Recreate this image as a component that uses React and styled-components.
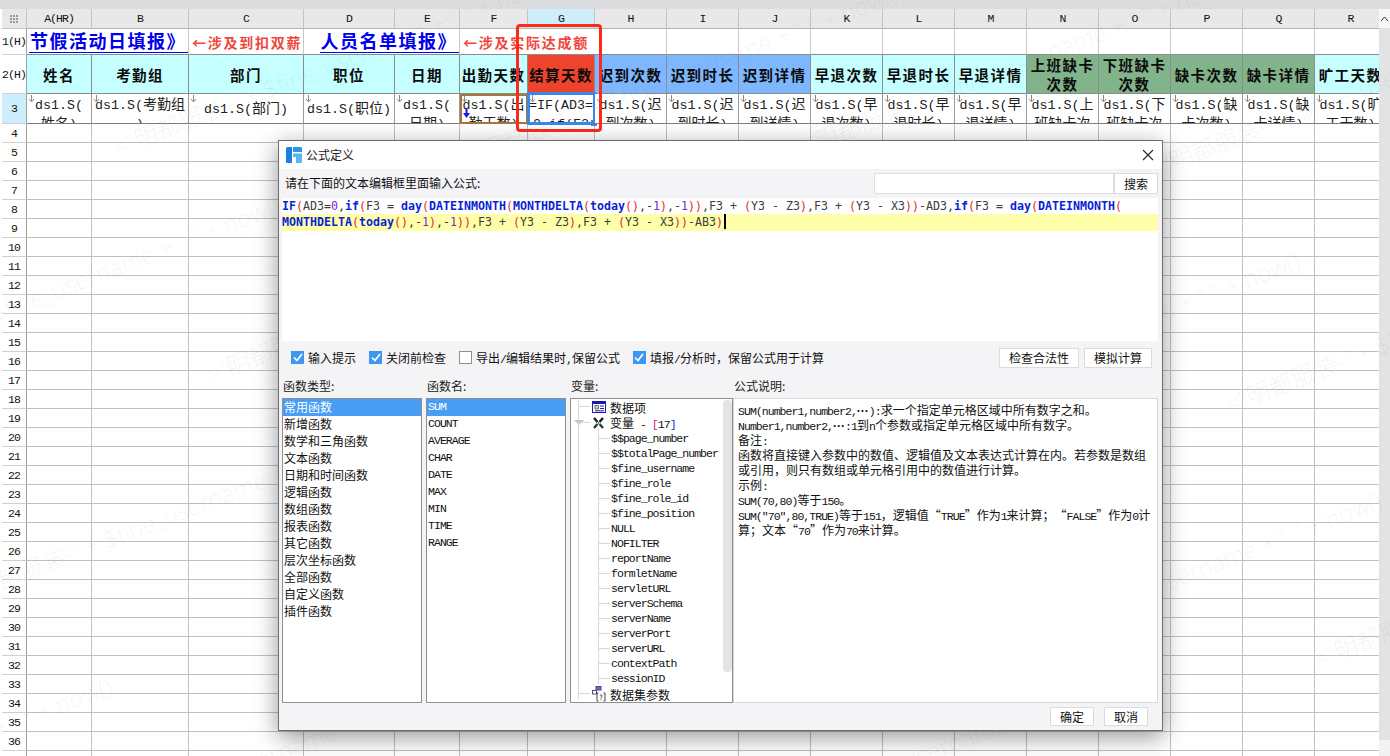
import React from "react";
import styled, { createGlobalStyle } from "styled-components";

const CJK = '"Noto Sans CJK SC", "Liberation Sans", sans-serif';
const MONO = '"Liberation Mono", "Noto Sans CJK SC", monospace';
const COLS = "27px 65px 97px 115px 91px 65px 68px 67px 72px 72px 72px 72px 72px 72px 72px 72px 72px 72px 72px";

const Global = createGlobalStyle`
  html, body { margin: 0; padding: 0; background: #fff; overflow: hidden; }
  body { font-family: ${CJK}; font-size: 12px; color: #111; }
  * { box-sizing: border-box; }
`;

const Page = styled.div`
  position: relative;
  width: 1390px;
  height: 756px;
  overflow: hidden;
  background: #fff;
`;
const TopBar = styled.div`
  height: 9px;
  background: #dcdcde;
`;
const Workspace = styled.div`
  display: flex;
  height: 747px;
`;
const Sheet = styled.div`
  width: 1379px;
  overflow: hidden;
`;
const Row = styled.div`
  display: grid;
  grid-template-columns: ${COLS};
  grid-template-rows: ${(p) => p.$h}px;
  height: ${(p) => p.$h}px;
`;
const Corner = styled.div`
  display: flex;
  align-items: center;
  justify-content: center;
  background: #e8e8e8;
  border-right: 1px solid #c4c4c4;
  border-bottom: 1px solid #c4c4c4;
  margin-left: 2px;
`;
const ColLabel = styled.div`
  display: flex;
  align-items: center;
  justify-content: center;
  background: ${(p) => (p.$active ? "#cdeefa" : "#e8e8e8")};
  border-right: 1px solid #c4c4c4;
  border-bottom: 1px solid #b4b4b4;
  font-family: ${MONO};
  font-size: 11.5px;
  letter-spacing: -0.96px;
`;
const RowLabel = styled.div`
  display: flex;
  align-items: center;
  justify-content: center;
  margin-left: 2px;
  background: ${(p) => (p.$active ? "#cdeefa" : "#fff")};
  border-right: 1px solid #a0a0a0;
  border-bottom: 1px solid #d0d0d0;
  font-family: ${MONO};
  font-size: 11.5px;
  letter-spacing: -0.96px;
  white-space: nowrap;
`;
const GridCell = styled.div`
  border-right: 1px solid #bfbfbf;
  border-bottom: 1px solid #bfbfbf;
`;
const TitleCell = styled.div`
  grid-column: span ${(p) => p.$span || 1};
  display: flex;
  align-items: ${(p) => (p.$link ? "flex-end" : "center")};
  justify-content: ${(p) => (p.$link ? "flex-end" : "flex-start")};
  padding-left: ${(p) => (p.$link ? 0 : 3)}px;
  padding-bottom: ${(p) => (p.$link ? 1 : 0)}px;
  border-right: 1px solid #c8c8c8;
  border-bottom: 1px solid #8c8c8c;
  overflow: hidden;
  white-space: nowrap;
`;
const SheetLink = styled.span`
  display: block;
  height: 25px;
  line-height: 25px;
  padding: 0 2px 0 1px;
  border-bottom: 1px solid #0000ee;
  color: #0000ee;
  font-size: 18px;
  font-weight: 700;
  letter-spacing: 1.5px;
`;
const SheetNote = styled.span`
  color: #f0463a;
  font-size: 14px;
  font-weight: 700;
  letter-spacing: 1.75px;
`;
const HeadCell = styled.div`
  display: flex;
  align-items: center;
  justify-content: center;
  text-align: center;
  overflow: hidden;
  background: ${(p) => p.$bg};
  border-right: 1px solid #8c8c8c;
  border-bottom: 1px solid #8c8c8c;
  font-size: 14.5px;
  font-weight: 700;
  letter-spacing: 1.4px;
  line-height: 19px;
  color: #0b0b0b;
  white-space: ${(p) => (p.$wrap ? "pre-line" : "nowrap")};
`;
const TemplateCell = styled.div`
  position: relative;
  min-height: 0;
  border-right: 1px solid #9a9a9a;
  border-bottom: 1px solid #7e7e7e;
  background: #fff;
  ${(p) => p.$mark && `outline: 2px solid #a5763c; outline-offset: -2px;`}
`;
const CellText = styled.div`
  height: 100%;
  overflow: hidden;
  display: flex;
  flex-direction: column;
  justify-content: ${(p) => (p.$single ? "center" : "flex-start")};
  padding-top: ${(p) => (p.$single ? 0 : 1)}px;
  text-align: center;
  font-size: 14px;
  line-height: 17px;
  color: #222;
  white-space: nowrap;
`;
const Latin13 = styled.span`
  font-family: ${MONO};
  font-size: 13.33px;
`;
const DropArrow = styled.svg`
  position: absolute;
  left: 1px;
  top: 1px;
`;
const Selection = styled.div`
  position: absolute;
  left: -1px;
  right: -2px;
  top: -2px;
  bottom: -2px;
  border: 3px solid #3a88ee;
  &::after {
    content: "";
    position: absolute;
    right: -4px;
    bottom: -4px;
    width: 6px;
    height: 6px;
    background: #3a88ee;
  }
`;
const BlueMark = styled.svg`
  position: absolute;
  left: 3px;
  top: 15px;
`;
const Scrollbar = styled.div`
  width: 11px;
  display: flex;
  flex-direction: column;
  background: #e4e4e4;
`;
const ScrollButton = styled.div`
  height: 19px;
  background: #f7f7f7;
  display: flex;
  align-items: center;
  justify-content: center;
`;
const ScrollTrack = styled.div`
  flex: 1;
  background: #e3e3e3;
`;
const ScrollEnd = styled.div`
  height: 16px;
  background: #f2f2f2;
`;
const Annotation = styled.div`
  position: absolute;
  left: 516px;
  top: 24px;
  width: 86px;
  height: 108px;
  border: 3px solid #fb2b1c;
  border-radius: 4px;
  pointer-events: none;
`;
const Watermarks = styled.div`
  position: absolute;
  inset: 0;
  pointer-events: none;
`;
const Watermark = styled.span`
  position: absolute;
  transform-origin: 0 100%;
  transform: rotate(-21deg);
  font-family: "Open Sans", "Noto Sans CJK SC", sans-serif;
  font-size: 24px;
  font-weight: 300;
  color: rgba(0, 0, 0, 0.06);
  white-space: nowrap;
`;

const Dialog = styled.div`
  position: absolute;
  left: 278px;
  top: 140px;
  width: 885px;
  height: 591px;
  display: flex;
  flex-direction: column;
  background: #f4f4f6;
  border: 1px solid #6e6e6e;
  box-shadow: 0 6px 22px rgba(0, 0, 0, 0.42);
`;
const TitleBar = styled.div`
  height: 28px;
  flex: none;
  display: flex;
  align-items: center;
  justify-content: space-between;
  padding: 0 8px 0 7px;
  background: #fff;
`;
const TitleGroup = styled.div`
  display: flex;
  align-items: center;
  gap: 4px;
  font-size: 12px;
  color: #222;
`;
const TitleText = styled.span`
  padding-bottom: 2px;
`;
const DialogBody = styled.div`
  flex: 1;
  display: flex;
  flex-direction: column;
  padding: 4px 4px 3px 3px;
`;
const SearchRow = styled.div`
  height: 21px;
  display: flex;
  align-items: center;
  padding-left: 3px;
`;
const PromptText = styled.div`
  flex: 1;
  padding-bottom: 2px;
`;
const SearchInput = styled.div`
  width: 240px;
  height: 21px;
  background: #fff;
  border: 1px solid #dedede;
`;
const FlatButton = styled.div`
  width: ${(p) => p.$w}px;
  height: ${(p) => p.$h || 20}px;
  margin-left: ${(p) => p.$ml || 0}px;
  display: flex;
  align-items: center;
  justify-content: center;
  background: #fff;
  border: 1px solid #dcdcdc;
  font-size: 12px;
  color: #111;
`;
const Editor = styled.div`
  height: 143px;
  margin-top: 4px;
  background: #fff;
  font-family: "DejaVu Sans Mono", monospace;
  font-size: 11.63px;
  white-space: pre;
`;
const EditorLine = styled.div`
  height: ${(p) => p.$h}px;
  line-height: 16px;
  background: ${(p) => (p.$current ? "#ffffaa" : "transparent")};
`;
const Token = styled.span`
  color: ${(p) => p.$c};
  font-weight: ${(p) => (p.$b ? 700 : 400)};
`;
const Caret = styled.span`
  display: inline-block;
  width: 2px;
  height: 15px;
  margin-left: 1px;
  vertical-align: -3px;
  background: #000;
`;
const OptionRow = styled.div`
  height: 21px;
  margin-top: 6px;
  display: flex;
  align-items: center;
  padding-left: 9px;
`;
const Option = styled.div`
  display: flex;
  align-items: center;
  gap: 4px;
  margin-right: 13px;
`;
const Box = styled.div`
  width: 13px;
  height: 13px;
  display: flex;
  align-items: center;
  justify-content: center;
  background: ${(p) => (p.$on ? "#3d97f2" : "#fff")};
  border: 1px solid ${(p) => (p.$on ? "#3d97f2" : "#8f8f8f")};
`;
const Spacer = styled.div`
  flex: 1;
`;
const ButtonGap = styled.div`
  display: flex;
  margin-right: 6px;
`;
const Panels = styled.div`
  display: flex;
  margin-top: 9px;
`;
const Column = styled.div`
  width: ${(p) => p.$w}px;
  flex: none;
  margin-right: ${(p) => p.$mr || 0}px;
  display: flex;
  flex-direction: column;
`;
const ColumnTitle = styled.div`
  height: 21px;
  line-height: 18px;
  padding-left: 1px;
  color: #222;
`;
const ListBox = styled.div`
  height: 305px;
  overflow: hidden;
  background: #fff;
  border: 1px solid #8f8f8f;
`;
const ListItem = styled.div`
  height: 17px;
  line-height: 15px;
  padding-left: 1px;
  background: ${(p) => (p.$on ? "#4a9df5" : "transparent")};
  color: ${(p) => (p.$on ? "#fff" : "#111")};
  font-family: ${(p) => (p.$mono ? MONO : CJK)};
  font-size: ${(p) => (p.$mono ? 11.5 : 12)}px;
  letter-spacing: ${(p) => (p.$mono ? -0.96 : 0)}px;
`;
const TreeBox = styled.div`
  position: relative;
  height: 305px;
  overflow: hidden;
  background: #fff;
  border: 1px solid #8f8f8f;
`;
const TreeThumb = styled.div`
  position: absolute;
  right: 0;
  top: 1px;
  width: 9px;
  height: 272px;
  border-radius: 4px;
  background: #e4e4e4;
`;
const TreeRow = styled.div`
  position: relative;
  height: ${(p) => (p.$root ? 16 : 15)}px;
  line-height: 15px;
  padding-left: ${(p) => (p.$root ? 21 : 40)}px;
  display: flex;
  align-items: center;
  gap: 4px;
  white-space: nowrap;
  &::before {
    content: "";
    position: absolute;
    left: ${(p) => (p.$root ? 7 : 27)}px;
    top: 7px;
    width: 12px;
    border-top: 1px solid #d8d8d8;
  }
`;
const TreeGuide = styled.div`
  position: absolute;
  left: ${(p) => p.$x}px;
  top: ${(p) => p.$top}px;
  height: ${(p) => p.$h}px;
  border-left: 1px solid #d8d8d8;
`;
const Expander = styled.div`
  position: absolute;
  left: 3px;
  top: 21px;
  width: 0;
  height: 0;
  border-left: 5px solid transparent;
  border-right: 5px solid transparent;
  border-top: 5px solid #c4c4c4;
`;
const TreeMono = styled.span`
  font-family: ${MONO};
  font-size: 11.5px;
  letter-spacing: -0.96px;
  color: ${(p) => p.$c || "#111"};
`;
const TreeLabel = styled.span`
  font-size: 12px;
  color: #111;
`;
const Description = styled.div`
  height: 305px;
  overflow: hidden;
  background: #fff;
  border: 1px solid #d8d8d8;
  padding: 3px 4px 0 4px;
  font-size: 12px;
  line-height: 15px;
  color: #111;
`;
const DescLine = styled.div`
  height: 15px;
  white-space: nowrap;
`;
const Latin = styled.span`
  font-family: ${MONO};
  font-size: 11.5px;
  letter-spacing: -0.96px;
`;
const WideQuote = styled.span`
  display: inline-block;
  width: 12px;
  text-align: ${(p) => (p.$open ? "right" : "left")};
`;
const WideDots = styled.span`
  font-family: "Liberation Sans", sans-serif;
  font-size: 12px;
  font-weight: 700;
`;
const Footer = styled.div`
  display: flex;
  justify-content: flex-end;
  gap: 10px;
  margin-top: 4px;
  padding-right: 10px;
`;

const DOTS = "\u00b7\u00b7\u00b7";
const splitLatin = (text, Comp) =>
  text.split(/([\x20-\x7e]+|[\u201c\u201d]|\u00b7\u00b7\u00b7)/).map((part, i) => {
    if (part === DOTS) return <WideDots key={i}>{part}</WideDots>;
    if (part === "\u201c" || part === "\u201d") return <WideQuote key={i} $open={part === "\u201c"}>{part}</WideQuote>;
    return /^[\x20-\x7e]+$/.test(part) ? <Comp key={i}>{part}</Comp> : part;
  });

const LETTERS = ["A(HR)", ..."BCDEFGHIJKLMNOPQR"];
const CYAN = "#c6ffff";
const BLUE = "#7eb7ff";
const GREEN = "#82b48c";
const HEADS = [
  ["姓名", CYAN], ["考勤组", CYAN], ["部门", CYAN], ["职位", CYAN], ["日期", CYAN],
  ["出勤天数", CYAN], ["结算天数", "#ee442d"], ["迟到次数", BLUE], ["迟到时长", BLUE], ["迟到详情", BLUE],
  ["早退次数", CYAN], ["早退时长", CYAN], ["早退详情", CYAN], ["上班缺卡\n次数", GREEN], ["下班缺卡\n次数", GREEN],
  ["缺卡次数", GREEN], ["缺卡详情", GREEN], ["旷工天数", CYAN],
];
const TEMPLATES = [
  ["ds1.S(", "姓名)"], ["ds1.S(考勤组", ")"], ["ds1.S(部门)"], ["ds1.S(职位)"], ["ds1.S(", "日期)"],
  ["ds1.S(出", "勤天数)"], ["=IF(AD3=", "0,if(F3"], ["ds1.S(迟", "到次数)"], ["ds1.S(迟", "到时长)"], ["ds1.S(迟", "到详情)"],
  ["ds1.S(早", "退次数)"], ["ds1.S(早", "退时长)"], ["ds1.S(早", "退详情)"], ["ds1.S(上", "班缺卡次"], ["ds1.S(下", "班缺卡次"],
  ["ds1.S(缺", "卡次数)"], ["ds1.S(缺", "卡详情)"], ["ds1.S(旷", "工天数)"],
];
const BODY_ROWS = Array.from({ length: 34 }, (_, i) => i + 4);
const WATERMARK = '="明都服装-" + $fine_username + " " + now()';
const MARKS = [
  [-152, 352], [120, 128], [465, 140], [800, 130], [1155, 150], [212, 355], [868, 407],
  [1232, 385], [-40, 578], [950, 647], [1320, 640], [-320, 832], [30, 830], [700, 822],
];

const KEYWORDS = /^(IF|if|day|DATEINMONTH|MONTHDELTA|today)$/;
const tokenize = (src) =>
  src.match(/[A-Za-z_][A-Za-z0-9_]*|\d+|[()]|[^A-Za-z0-9()]+/g).map((t, i) => {
    if (KEYWORDS.test(t)) return <Token key={i} $c="#0a1fd6" $b>{t}</Token>;
    if (t === "(" || t === ")") return <Token key={i} $c="#e8262a">{t}</Token>;
    if (/^\d+$/.test(t)) return <Token key={i} $c="#7a2ad0">{t}</Token>;
    return <Token key={i} $c="#3c3c3c">{t}</Token>;
  });

const LINE1 = "IF(AD3=0,if(F3 = day(DATEINMONTH(MONTHDELTA(today(),-1),-1)),F3 + (Y3 - Z3),F3 + (Y3 - X3))-AD3,if(F3 = day(DATEINMONTH(";
const LINE2 = "MONTHDELTA(today(),-1),-1)),F3 + (Y3 - Z3),F3 + (Y3 - X3))-AB3)";

const TYPES = ["常用函数", "新增函数", "数学和三角函数", "文本函数", "日期和时间函数", "逻辑函数", "数组函数", "报表函数", "其它函数", "层次坐标函数", "全部函数", "自定义函数", "插件函数"];
const NAMES = ["SUM", "COUNT", "AVERAGE", "CHAR", "DATE", "MAX", "MIN", "TIME", "RANGE"];
const VARS = ["$$page_number", "$$totalPage_number", "$fine_username", "$fine_role", "$fine_role_id", "$fine_position", "NULL", "NOFILTER", "reportName", "formletName", "servletURL", "serverSchema", "serverName", "serverPort", "serverURL", "contextPath", "sessionID"];
const DESC = [
  `SUM(number1,number2,${DOTS}):求一个指定单元格区域中所有数字之和。`,
  `Number1,number2,${DOTS}:1到n个参数或指定单元格区域中所有数字。`,
  "备注:",
  "函数将直接键入参数中的数值、逻辑值及文本表达式计算在内。若参数是数组",
  "或引用\uff0c则只有数组或单元格引用中的数值进行计算。",
  "示例:",
  "SUM(70,80)等于150。",
  "SUM(\"70\",80,TRUE)等于151\uff0c逻辑值\u201cTRUE\u201d作为1来计算\uff1b\u201cFALSE\u201d作为0计",
  "算\uff1b文本\u201c70\u201d作为70来计算。",
];

const Check = () => (
  <svg width="10" height="9" viewBox="0 0 10 9">
    <path d="M1 4.5 L4 7.5 L9 1" fill="none" stroke="#fff" strokeWidth="1.7" />
  </svg>
);
const CheckOption = ({ on, children }) => (
  <Option>
    <Box $on={on}>{on && <Check />}</Box>
    <span>{splitLatin(children, Latin)}</span>
  </Option>
);
const Logo = () => (
  <svg width="16" height="16" viewBox="0 0 16 16">
    <path d="M0 1.5 Q0 0 1.5 0 H6 V16 H1.5 Q0 16 0 14.5 Z" fill="#1c7fdc" />
    <path d="M7 0 H14.5 Q16 0 16 1.5 V5 H7 Z" fill="#2a93ea" />
    <path d="M7 6.5 H16 V14.5 Q16 16 14.5 16 H10 V10 H7 Z" fill="#59b6f2" />
  </svg>
);
const DataIcon = () => (
  <svg width="14" height="12" viewBox="0 0 14 12">
    <rect x="0.5" y="0.5" width="13" height="11" fill="#fff" stroke="#1a1ab0" />
    <rect x="0.5" y="0.5" width="13" height="2.5" fill="#1a1ab0" />
    <rect x="3" y="4.5" width="3.5" height="3.5" fill="#f2d83a" stroke="#1a1ab0" strokeWidth="0.6" />
    <path d="M8 5 H12 M8 7.5 H12 M3 9.8 H12" stroke="#1a1ab0" strokeWidth="1" />
  </svg>
);
const VarIcon = () => (
  <svg width="14" height="12" viewBox="0 0 14 12">
    <path d="M2 1 L5.5 5 M11 1 L7.5 5" stroke="#1d1d1d" strokeWidth="2.4" />
    <path d="M2 11 L5.5 7 M11 11 L7.5 7" stroke="#23402c" strokeWidth="2.4" />
    <circle cx="6.5" cy="6" r="1" fill="#4c8a5a" />
  </svg>
);
const ParamIcon = () => (
  <svg width="14" height="16" viewBox="0 0 14 16">
    <rect x="0.5" y="4.5" width="4" height="3.5" fill="#fff" stroke="#4a4a90" />
    <rect x="4" y="0.5" width="5" height="3.5" fill="#6a6ab8" stroke="#4a4a90" />
    <path d="M6.5 15 H5 V7 H6.5 M11.5 15 H13 V7 H11.5" fill="none" stroke="#444" />
    <path d="M7.8 9.5 Q9 8 10.2 9.5 Q10.2 10.6 9 11.2 V12.4 M9 13.2 V14.2" fill="none" stroke="#444" strokeWidth="0.9" />
  </svg>
);

export default function App() {
  return (
    <Page>
      <Global />
      <TopBar />
      <Workspace>
        <Sheet>
          <Row $h={20}>
            <Corner>
              <svg width="10" height="10" viewBox="0 0 10 10">
                {[1, 4, 7].flatMap((y) =>
                  [1, 4, 7].map((x) => <rect key={`${x}${y}`} x={x} y={y} width="2" height="2" fill="#9a9a9a" />)
                )}
              </svg>
            </Corner>
            {LETTERS.map((l) => (
              <ColLabel key={l} $active={l === "G"}>{l}</ColLabel>
            ))}
          </Row>
          <Row $h={26}>
            <RowLabel>1(H)</RowLabel>
            <TitleCell $span={2} $link><SheetLink>节假活动日填报》</SheetLink></TitleCell>
            <TitleCell><SheetNote>←涉及到扣双薪</SheetNote></TitleCell>
            <TitleCell $span={2} $link><SheetLink>人员名单填报》</SheetLink></TitleCell>
            <TitleCell $span={3}><SheetNote>←涉及实际达成额</SheetNote></TitleCell>
            {LETTERS.slice(8).map((l) => <TitleCell key={l} />)}
          </Row>
          <Row $h={39}>
            <RowLabel>2(H)</RowLabel>
            {HEADS.map(([t, bg]) => (
              <HeadCell key={t} $bg={bg} $wrap={t.includes("\n")}>{t}</HeadCell>
            ))}
          </Row>
          <Row $h={30}>
            <RowLabel $active>3</RowLabel>
            {TEMPLATES.map((lines, i) => (
              <TemplateCell key={i} $mark={i === 5}>
                <CellText $single={lines.length === 1}>
                  {lines.map((l) => (
                    <div key={l}>{splitLatin(l, Latin13)}</div>
                  ))}
                </CellText>
                <DropArrow width="7" height="8" viewBox="0 0 7 8">
                  <path d="M3.5 0 V6 M1 4 L3.5 7 L6 4" fill="none" stroke="#8a8a8a" strokeWidth="1" />
                </DropArrow>
                {i === 5 && (
                  <BlueMark width="7" height="9" viewBox="0 0 7 9">
                    <path d="M2.5 0 H4.5 V4 H7 L3.5 9 L0 4 H2.5 Z" fill="#1a1ae0" />
                  </BlueMark>
                )}
                {i === 6 && <Selection />}
              </TemplateCell>
            ))}
          </Row>
          {BODY_ROWS.map((n) => (
            <Row key={n} $h={19}>
              <RowLabel>{n}</RowLabel>
              {LETTERS.map((l) => <GridCell key={l} />)}
            </Row>
          ))}
        </Sheet>
        <Scrollbar>
          <ScrollButton>
            <svg width="9" height="6" viewBox="0 0 9 6">
              <path d="M1 5 L4.5 1 L8 5" fill="none" stroke="#333" />
            </svg>
          </ScrollButton>
          <ScrollTrack />
          <ScrollEnd />
        </Scrollbar>
      </Workspace>

      <Watermarks>
        {MARKS.map(([x, y]) => (
          <Watermark key={`${x}-${y}`} style={{ left: x, top: y }}>{WATERMARK}</Watermark>
        ))}
      </Watermarks>
      <Annotation />

      <Dialog>
        <TitleBar>
          <TitleGroup><Logo /><TitleText>公式定义</TitleText></TitleGroup>
          <svg width="12" height="12" viewBox="0 0 12 12">
            <path d="M1 1 L11 11 M11 1 L1 11" stroke="#222" strokeWidth="1.1" />
          </svg>
        </TitleBar>
        <DialogBody>
          <SearchRow>
            <PromptText>请在下面的文本编辑框里面输入公式:</PromptText>
            <SearchInput />
            <FlatButton $w={44} $h={21}>搜索</FlatButton>
          </SearchRow>
          <Editor>
            <EditorLine $h={16}>{tokenize(LINE1)}</EditorLine>
            <EditorLine $h={17} $current>{tokenize(LINE2)}<Caret /></EditorLine>
          </Editor>
          <OptionRow>
            <CheckOption on>输入提示</CheckOption>
            <CheckOption on>关闭前检查</CheckOption>
            <CheckOption>导出/编辑结果时,保留公式</CheckOption>
            <CheckOption on>{"填报/分析时\uff0c保留公式用于计算"}</CheckOption>
            <Spacer />
            <ButtonGap>
              <FlatButton $w={80}>检查合法性</FlatButton>
              <FlatButton $w={68} $ml={5}>模拟计算</FlatButton>
            </ButtonGap>
          </OptionRow>
          <Panels>
            <Column $w={140} $mr={4}>
              <ColumnTitle>函数类型:</ColumnTitle>
              <ListBox>
                {TYPES.map((t, i) => <ListItem key={t} $on={i === 0}>{t}</ListItem>)}
              </ListBox>
            </Column>
            <Column $w={140} $mr={4}>
              <ColumnTitle>函数名:</ColumnTitle>
              <ListBox>
                {NAMES.map((t, i) => <ListItem key={t} $mono $on={i === 0}>{t}</ListItem>)}
              </ListBox>
            </Column>
            <Column $w={163}>
              <ColumnTitle>变量:</ColumnTitle>
              <TreeBox>
                <TreeGuide $x={7} $top={0} $h={300} />
                <TreeGuide $x={27} $top={30} $h={255} />
                <Expander />
                <TreeRow $root><DataIcon /><TreeLabel>数据项</TreeLabel></TreeRow>
                <TreeRow $root>
                  <VarIcon />
                  <TreeLabel>变量<TreeMono> - </TreeMono><TreeMono $c="#d0208a">[</TreeMono><TreeMono>17</TreeMono><TreeMono $c="#2030d0">]</TreeMono></TreeLabel>
                </TreeRow>
                {VARS.map((v) => (
                  <TreeRow key={v}><TreeMono>{v}</TreeMono></TreeRow>
                ))}
                <TreeRow $root><ParamIcon /><TreeLabel>数据集参数</TreeLabel></TreeRow>
                <TreeThumb />
              </TreeBox>
            </Column>
            <Column $w={425}>
              <ColumnTitle>公式说明:</ColumnTitle>
              <Description>
                {DESC.map((d) => <DescLine key={d}>{splitLatin(d, Latin)}</DescLine>)}
              </Description>
            </Column>
          </Panels>
          <Footer>
            <FlatButton $w={44} $h={19}>确定</FlatButton>
            <FlatButton $w={44} $h={19}>取消</FlatButton>
          </Footer>
        </DialogBody>
      </Dialog>
    </Page>
  );
}
